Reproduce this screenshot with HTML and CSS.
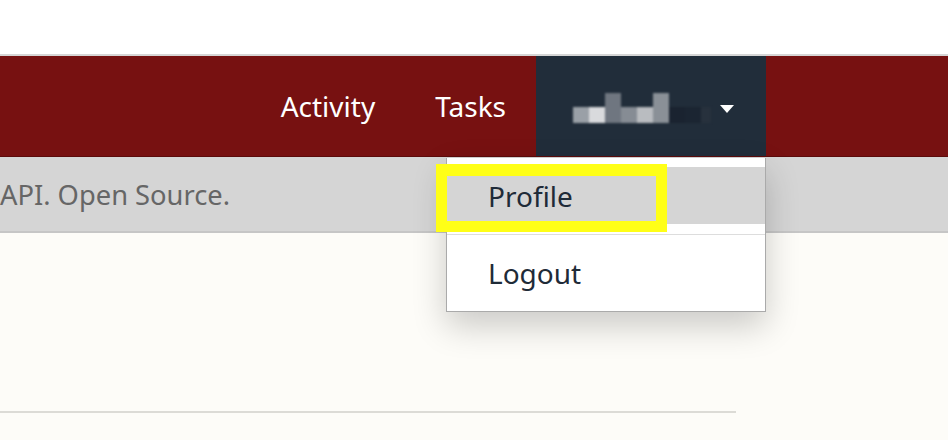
FILE: index.html
```html
<!DOCTYPE html>
<html>
<head>
<meta charset="utf-8">
<link rel="stylesheet" href="styles.css">
</head>
<body>
<div class="topspace"></div>
<header class="nav">
  <a class="nav-link">Activity</a>
  <a class="nav-link">Tasks</a>
  <div class="user-btn">
    <div class="blur-name">
      <span class="px c1"></span><span class="px c2"></span><span class="px c3"></span><span class="px c4"></span><span class="px c5"></span><span class="px c6"></span><span class="px c7"></span><span class="px c8"></span><span class="px c9"></span>
    </div>
    <span class="caret"></span>
  </div>
  <div class="nav-end"></div>
</header>
<div class="subbar">API. Open Source.</div>
<main class="content">
  <div class="rule"></div>
</main>
<div class="dropdown">
  <div class="dd-item active">Profile</div>
  <div class="dd-divider"></div>
  <div class="dd-item">Logout</div>
</div>
<div class="highlight"></div>
</body>
</html>
```
FILE: styles.css
```css
html, body {
  margin: 0;
  padding: 0;
  height: 440px;
  overflow: hidden;
  background: #fdfcf8;
  font-family: "Noto Sans", "Open Sans", sans-serif;
}
.topspace {
  height: 54px;
  background: #ffffff;
}
.nav {
  height: 100px;
  border-top: 2px solid #d6d6d6;
  border-bottom: 1px solid #5c0b0b;
  background: #771111;
  display: flex;
  justify-content: flex-end;
  align-items: stretch;
}
.nav-link {
  display: flex;
  align-items: center;
  padding: 0 30px;
  color: #ffffff;
  font-size: 28px;
}
.user-btn {
  width: 230px;
  box-sizing: border-box;
  background: #212d3a;
  display: flex;
  align-items: center;
  padding-left: 37px;
}
.blur-name {
  display: flex;
  align-items: flex-end;
  height: 30px;
  filter: blur(0.8px);
  margin-top: 4px;
}
.px {
  width: 16px;
  height: 16px;
}
.c1 { background: #9aa0a7; }
.c2 { background: #d9dadd; }
.c3 { background: #6f7680; height: 30px; }
.c4 { background: #868c94; }
.c5 { background: #b9bcc0; }
.c6 { background: #8a9097; height: 30px; }
.c7 { background: #1a2330; }
.c8 { background: #1b2532; }
.c9 { background: #27313d; width: 10px; }
.caret {
  margin-left: 9px;
  margin-top: 6px;
  width: 0;
  height: 0;
  border-left: 7px solid transparent;
  border-right: 7px solid transparent;
  border-top: 8px solid #ffffff;
}
.nav-end {
  width: 182px;
}
.subbar {
  height: 74px;
  background: #d5d5d5;
  border-bottom: 2px solid #c6c6c6;
  display: flex;
  align-items: center;
  color: #666666;
  font-size: 27.3px;
  padding-left: 0;
}
.content {
  height: 210px;
  background: #fdfcf8;
  padding-top: 178px;
  box-sizing: border-box;
}
.rule {
  width: 736px;
  height: 2px;
  background: #dcdbd6;
}
.dropdown {
  position: absolute;
  left: 446px;
  top: 158px;
  width: 318px;
  background: #ffffff;
  border: 1px solid #aaaaaa;
  border-top: none;
  padding: 9px 0 10px;
  box-shadow: 0 14px 32px rgba(0, 0, 0, 0.2);
}
.dd-item {
  height: 57px;
  display: flex;
  align-items: center;
  padding-left: 41px;
  color: #1f2b38;
  font-size: 28px;
}
.dd-item.active {
  background: #d5d5d5;
}
.dd-divider {
  height: 1px;
  background: #dddddd;
  margin: 10px 0 9px;
}
.highlight {
  position: absolute;
  left: 436px;
  top: 164px;
  width: 209px;
  height: 45px;
  border: 11px solid #ffff17;
  border-top-width: 12px;
}
```
